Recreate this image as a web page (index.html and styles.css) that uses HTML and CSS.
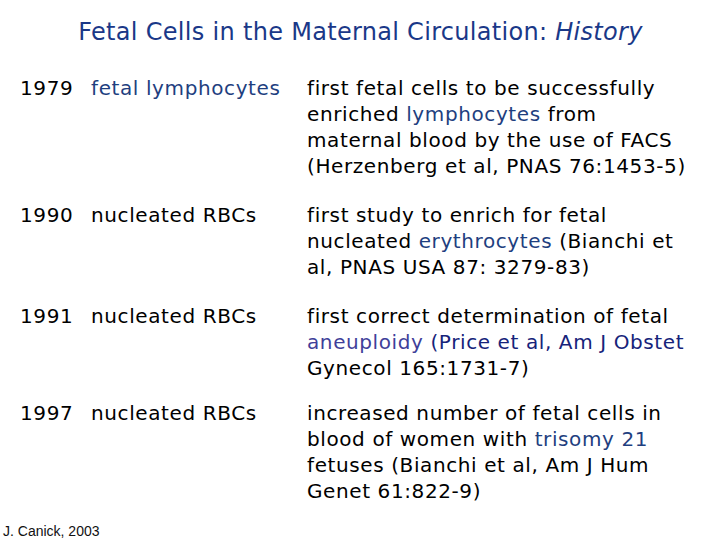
FILE: index.html
```html
<!DOCTYPE html>
<html>
<head>
<meta charset="utf-8">
<link rel="stylesheet" href="styles.css">
</head>
<body>
<div class="slide">
  <h1 class="title">Fetal Cells in the Maternal Circulation: <i>History</i></h1>
  <div class="rows">
    <div class="row r1">
      <div class="year">1979</div>
      <div class="what blue">fetal lymphocytes</div>
      <div class="desc">first fetal cells to be successfully<br>enriched <span class="blue">lymphocytes</span> from<br>maternal blood by the use of FACS<br>(Herzenberg et al, PNAS 76:1453-5)</div>
    </div>
    <div class="row r2">
      <div class="year">1990</div>
      <div class="what">nucleated RBCs</div>
      <div class="desc">first study to enrich for fetal<br>nucleated <span class="blue">erythrocytes</span> (Bianchi et<br>al, PNAS USA 87: 3279-83)</div>
    </div>
    <div class="row r3">
      <div class="year">1991</div>
      <div class="what">nucleated RBCs</div>
      <div class="desc">first correct determination of fetal<br><span class="purple">aneuploidy</span> <span class="navy">(Price et al, Am J Obstet</span><br>Gynecol 165:1731-7)</div>
    </div>
    <div class="row r4">
      <div class="year">1997</div>
      <div class="what">nucleated RBCs</div>
      <div class="desc">increased number of fetal cells in<br>blood of women with <span class="blue">trisomy 21</span><br>fetuses (Bianchi et al, Am J Hum<br>Genet 61:822-9)</div>
    </div>
  </div>
  <div class="footer">J. Canick, 2003</div>
</div>
</body>
</html>
```
FILE: styles.css
```css
html, body {
  margin: 0;
  padding: 0;
  background: #fff;
}
.slide {
  width: 720px;
  height: 540px;
  display: flex;
  flex-direction: column;
  font-family: "DejaVu Sans", sans-serif;
  color: #000;
}
.title {
  margin: 17px 0 0 0;
  text-align: center;
  font-size: 24px;
  font-weight: normal;
  letter-spacing: 0.3px;
  color: #1a3888;
  line-height: 30px;
  padding-left: 1px;
}
.title i { font-style: italic; }
.rows {
  margin-top: 28px;
  display: flex;
  flex-direction: column;
}
.row {
  display: grid;
  grid-template-columns: 71px 216px 1fr;
  padding-left: 20px;
  font-size: 20px;
  letter-spacing: 0.6px;
  line-height: 26px;
}
.r1 { margin-bottom: 23px; }
.r2 { margin-bottom: 23px; }
.r3 { margin-bottom: 19px; }
.blue { color: #1f3f7f; }
.purple { color: #3f3f9a; }
.navy { color: #16237a; }
.footer {
  margin-top: auto;
  margin-bottom: 1px;
  padding-left: 3px;
  font-family: "Liberation Sans", Arial, sans-serif;
  font-size: 14px;
  color: #111;
}
```
